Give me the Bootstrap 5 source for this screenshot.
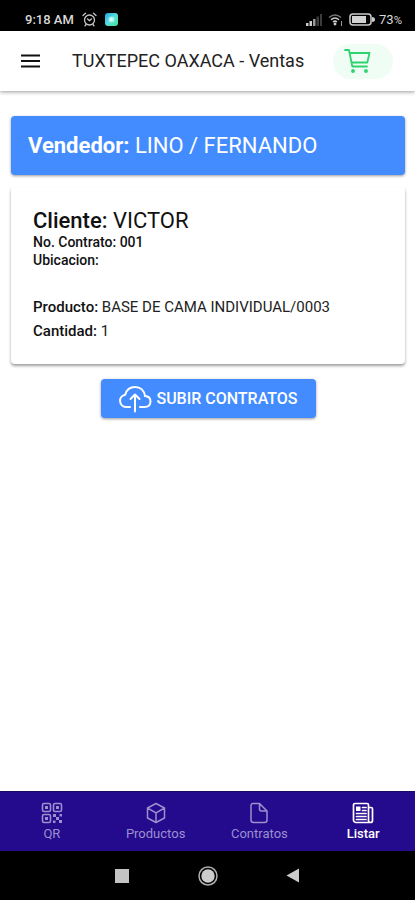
<!DOCTYPE html>
<html lang="es">
<head>
<meta charset="utf-8">
<meta name="viewport" content="width=device-width, initial-scale=1">
<title>TUXTEPEC OAXACA - Ventas</title>
<link href="https://cdn.jsdelivr.net/npm/bootstrap@5.3.0/dist/css/bootstrap.min.css" rel="stylesheet">
<style>
body { font-family: Roboto, "Liberation Sans", sans-serif; color: #1c1c1c; background: #fff; }
svg { display: block; flex: none; }
.status-bar { height: 31px; padding: 8px 13px 0 25px; background: #000; color: #d8d8d8; font-size: 13px; line-height: 24px; }
.status-bar .clock { font-weight: 500; }
.app-header { height: 60px; padding: 0 22px 0 18px; box-shadow: 0 1px 4px rgba(0,0,0,.4); }
.app-title { font-size: 18px; line-height: 24px; margin-left: 30px; color: #222; }
.cart-btn { width: 60px; height: 35px; padding: 0 0 0 10px; background: #f0fdf5; color: #2dd36f; }
.app-main { padding: 25px 10px 0 11px; }
.sheet { border-radius: 4px; }
.seller { background: #428cff; color: #fff; font-size: 22px; line-height: 27px; padding: 16px 17px; box-shadow: 0 1px 3px rgba(0,0,0,.4); }
.sale { margin-top: 12px; padding: 21px 22px 21px; font-size: 15px; line-height: 24px; box-shadow: 0 2px 3px rgba(0,0,0,.38); }
.client { font-size: 22px; line-height: 25px; font-weight: 400; color: #111; }
.meta { font-size: 14px; line-height: 18px; font-weight: 500; color: #111; }
.product { margin-top: 26px; color: #222; }
.medium { font-weight: 500; color: #111; }
.seller .medium { color: #fff; font-weight: 700; }
.upload-btn { margin-top: 15px; height: 39px; min-width: 215px; padding: 0 12px; background: #428cff; color: #fff; font-size: 16px; line-height: 20px; font-weight: 500; border-radius: 4px; box-shadow: 0 1px 3px rgba(0,0,0,.4); }
.upload-btn:hover { background: #3b7ee6; color: #fff; }
.tab-bar { height: 60px; background: #240a8c; border-top: 1px solid #1b0a63; }
.tab-link { color: #9c8fce; font-size: 13px; line-height: 16px; padding-top: 10px; }
.tab-link.active { color: #fff; font-weight: 500; }
.tab-link span { margin-top: 2px; }
.system-bar { height: 49px; background: #000; color: #c4c4c4; padding: 0 115px; }
</style>
<script src="https://cdn.jsdelivr.net/npm/bootstrap@5.3.0/dist/js/bootstrap.bundle.min.js"></script>
</head>
<body class="d-flex flex-column min-vh-100">
<div class="status-bar d-flex align-items-center justify-content-between">
  <div class="d-flex align-items-center gap-1">
    <span class="clock">9:18 AM</span>
    <svg class="ms-1" width="15" height="15" viewBox="0 0 15 15" fill="none" stroke="#c8c8c8" stroke-width="1.3" stroke-linecap="round"><circle cx="7.500" cy="8" r="5"/><path d="M1 3.500 3.500 1.300M14 3.500l-2.500-2.200M5.500 7l2 1.600 2-1.600M4 12.500l-1 1.300M11 12.500l1 1.300"/></svg>
    <svg class="ms-1" width="13" height="13" viewBox="0 0 13 13"><defs><linearGradient id="app" x2="1" y2="1"><stop stop-color="#25a3e6"/><stop offset=".5" stop-color="#54dfdc"/><stop offset="1" stop-color="#47e58d"/></linearGradient></defs><rect width="13" height="13" rx="3" fill="url(#app)"/><circle cx="6.500" cy="6.500" r="3" fill="#a5f4f0"/><path d="M5.500 5v3l2.500-1.500z" fill="#fff"/></svg>
  </div>
  <div class="d-flex align-items-center">
    <svg width="17" height="12" viewBox="0 0 17 12"><path d="M0 9h2.500v3H0zM3.500 7H6v5H3.500z" fill="#ccc"/><path d="M7 5h2.500v7H7z" fill="#999"/><path d="M10.500 2.500H13V12h-2.500zM14 0h2v12h-2z" fill="#3c3c3c"/></svg>
    <svg class="ms-1" width="18" height="13" viewBox="0 0 18 13" fill="none" stroke="#ccc" stroke-width="1.500"><path d="M2 4.500q6-5 12 0" stroke="#777"/><path d="M4 6.700q4-3.500 8 0M6 9q2-1.700 4 0"/><circle cx="8" cy="11" r=".7" fill="#ccc"/><path d="M14.500 8v5" stroke="#999" stroke-width="1"/></svg>
    <svg class="ms-1" width="26" height="13" viewBox="0 0 26 13"><rect x="1" y="1" width="21" height="11" rx="3" fill="none" stroke="#ccc" stroke-width="1.500"/><path d="M3 3h14v7H3z" fill="#d2d2d2"/><path d="M23 4q3 0 3 2.500T23 9z" fill="#ccc"/></svg>
    <span class="ms-1">73<small>%</small></span>
  </div>
</div>
<header class="app-header d-flex align-items-center">
  <button class="btn border-0 p-0" type="button" aria-label="Menú"><svg width="24" height="24" viewBox="0 0 24 24" stroke="#111" stroke-width="2"><path d="M3 6.500h19M3 12h19M3 17.500h19"/></svg></button>
  <h1 class="app-title mb-0 fw-normal">TUXTEPEC OAXACA - Ventas</h1>
  <button class="btn cart-btn border-0 rounded-pill ms-auto" type="button" aria-label="Carrito"><svg width="28" height="26" viewBox="0 0 28 26" fill="none" stroke="#2dd36f" stroke-width="1.800" stroke-linecap="round" stroke-linejoin="round"><path d="M2 2h4l3.300 16.500H24M6.700 5H26.500l-2.200 9.500H8.600"/><circle cx="10" cy="23" r="1" fill="#2dd36f"/><circle cx="23" cy="23" r="1" fill="#2dd36f"/></svg></button>
</header>
<main class="app-main flex-grow-1">
  <section class="sheet seller"><span class="medium">Vendedor:</span> LINO / FERNANDO</section>
  <section class="sheet sale">
    <h2 class="client mb-0"><span class="medium">Cliente:</span> VICTOR</h2>
    <div class="meta">No. Contrato: 001</div>
    <div class="meta">Ubicacion:</div>
    <div class="product">
      <div><span class="medium">Producto:</span> BASE DE CAMA INDIVIDUAL/0003</div>
      <div><span class="medium">Cantidad:</span> 1</div>
    </div>
  </section>
  <div class="d-flex justify-content-center">
    <button class="btn upload-btn border-0 d-flex align-items-center justify-content-center gap-1" type="button">
      <svg width="34" height="28" viewBox="0 0 34 28" fill="none" stroke="#fff" stroke-width="2" stroke-linecap="round" stroke-linejoin="round"><path d="M12 22H8a6.200 6.200 0 0 1-.8-12.300C8.500 5 12 2 17 2c5.500 0 9.300 3.600 10 9 3.500.2 5.500 2.500 5.500 5.500 0 3.500-2.500 5.500-6 5.500H22M17 26.500V10M12.500 14 17 9.500l4.500 4.500"/></svg>
      <span>SUBIR CONTRATOS</span>
    </button>
  </div>
</main>
<nav class="tab-bar row row-cols-4 g-0">
  <a href="#" class="tab-link col d-flex flex-column align-items-center text-decoration-none">
    <svg width="22" height="22" viewBox="0 0 22 22" fill="none" stroke="currentColor" stroke-width="1.600"><rect x="1.500" y="1.500" width="8" height="8" rx="1.500"/><rect x="12.500" y="1.500" width="8" height="8" rx="1.500"/><rect x="1.500" y="12.500" width="8" height="8" rx="1.500"/><path fill="currentColor" stroke="none" d="M4 4h3v3H4zM15 4h3v3h-3zM4 15h3v3H4zM12 12h3v3h-3zM15 15h3v3h-3zM18 18h3v3h-3zM18.500 12H21v2.500h-2.500zM12 18.500h2.500V21H12z"/></svg>
    <span>QR</span></a>
  <a href="#" class="tab-link col d-flex flex-column align-items-center text-decoration-none">
    <svg width="22" height="22" viewBox="0 0 22 22" fill="none" stroke="currentColor" stroke-width="1.500" stroke-linejoin="round"><path d="M11 1.500 19.500 6v10L11 20.500 2.500 16V6zM2.500 6 11 10.800 19.500 6M11 10.800v9.700"/></svg>
    <span>Productos</span></a>
  <a href="#" class="tab-link col d-flex flex-column align-items-center text-decoration-none">
    <svg width="22" height="22" viewBox="0 0 22 22" fill="none" stroke="currentColor" stroke-width="1.500" stroke-linejoin="round"><path d="M5 1.500h6.500L19 9v9a2.500 2.500 0 0 1-2.500 2.500h-11A2.500 2.500 0 0 1 3 18V3.500a2 2 0 0 1 2-2zM11.500 1.500V7a2 2 0 0 0 2 2H19"/></svg>
    <span>Contratos</span></a>
  <a href="#" class="tab-link active col d-flex flex-column align-items-center text-decoration-none" aria-current="page">
    <svg width="22" height="22" viewBox="0 0 22 22" fill="none" stroke="currentColor" stroke-width="1.700" stroke-linejoin="round" stroke-linecap="round"><path d="M16.500 20.500H4A2.500 2.500 0 0 1 1.500 18V3A1.500 1.500 0 0 1 3 1.500h12A1.500 1.500 0 0 1 16.500 3v15.500a2 2 0 0 0 4 0V7a1.500 1.500 0 0 0-1.500-1.500h-2.500M10.500 5.500H14M10.500 8.500H14M4.500 11.500H14M4.500 14.500H14M4.500 17.500H14"/><rect x="4" y="4.500" width="4.500" height="4.500" fill="currentColor" stroke="none"/></svg>
    <span>Listar</span></a>
</nav>
<div class="system-bar d-flex align-items-center justify-content-between">
  <svg width="14" height="14"><rect width="14" height="14" fill="#c4c4c4"/></svg>
  <svg width="20" height="20" viewBox="0 0 20 20"><circle cx="10" cy="10" r="9" fill="none" stroke="#b0b0b0" stroke-width="1.500"/><circle cx="10" cy="10" r="6.700" fill="#ccc"/></svg>
  <svg width="14" height="15" viewBox="0 0 14 15"><path d="M13 .5v14L.5 7.500z" fill="#ccc"/></svg>
</div>
</body>
</html>
